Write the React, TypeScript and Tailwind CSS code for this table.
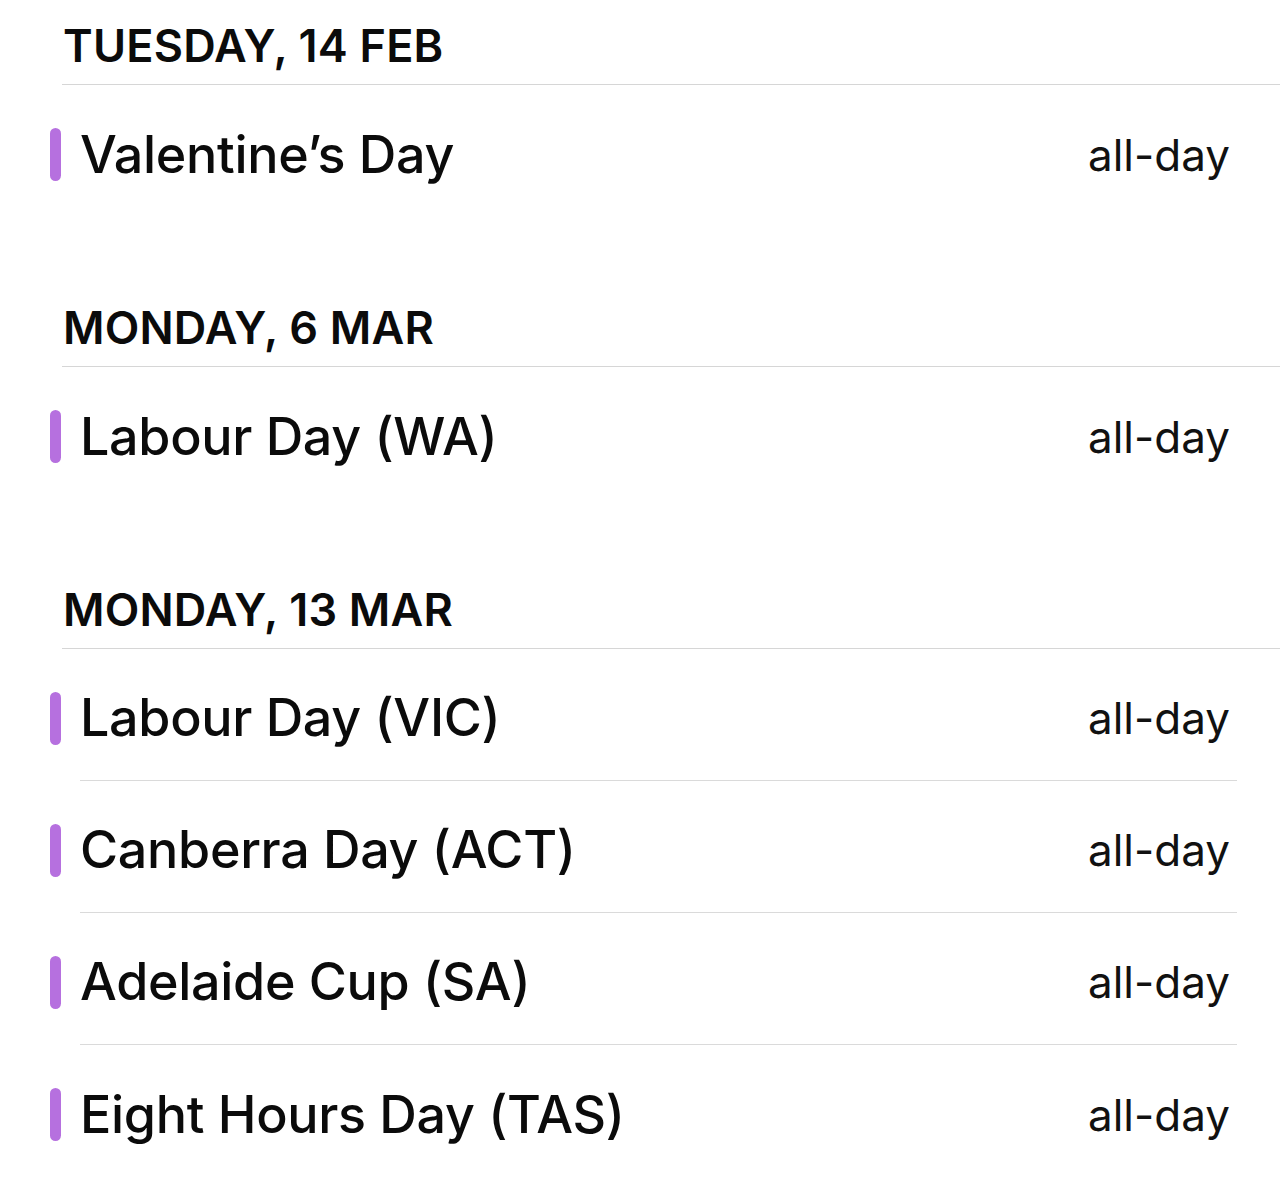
import React from "react";

type Section = { header: string; events: string[]; first?: boolean };

const sections: Section[] = [
  { header: "TUESDAY, 14 FEB", events: ["Valentine’s Day"], first: true },
  { header: "MONDAY, 6 MAR", events: ["Labour Day (WA)"] },
  {
    header: "MONDAY, 13 MAR",
    events: [
      "Labour Day (VIC)",
      "Canberra Day (ACT)",
      "Adelaide Cup (SA)",
      "Eight Hours Day (TAS)",
    ],
  },
];

function EventRow({ title, last }: { title: string; last: boolean }) {
  return (
    <div className="flex h-[132px]">
      <div className="flex w-[80px] shrink-0 items-center pt-[7px] pl-[50px]">
        <div className="h-[53px] w-[11px] rounded-full bg-[#b670df]" />
      </div>
      <div
        className={
          "mr-[43px] flex flex-1 items-center justify-between pt-[7px] " +
          (last ? "" : "border-b border-[#dadada]")
        }
      >
        <span className="text-[52px] leading-none font-medium text-[#0b0b0b] tracking-[-0.3px]">
          {title}
        </span>
        <span className="pr-[7px] text-[44px] leading-none font-normal text-[#111]">
          all-day
        </span>
      </div>
    </div>
  );
}

export default function App() {
  return (
    <div
      className="h-[1200px] w-[1280px] overflow-hidden bg-white"
      style={{ fontFamily: "Inter, 'Noto Sans', sans-serif" }}
    >
      {sections.map((s) => (
        <div key={s.header}>
          <div
            className={
              "ml-[62px] flex items-end border-b border-[#d6d6d6] pb-[16px] pl-[1px] " +
              (s.first ? "h-[85px]" : "h-[150px]")
            }
          >
            <span className="text-[45px] leading-none font-semibold text-[#0b0b0b] tracking-[0.2px]">
              {s.header}
            </span>
          </div>
          {s.events.map((e, i) => (
            <EventRow key={e} title={e} last={i === s.events.length - 1} />
          ))}
        </div>
      ))}
    </div>
  );
}
